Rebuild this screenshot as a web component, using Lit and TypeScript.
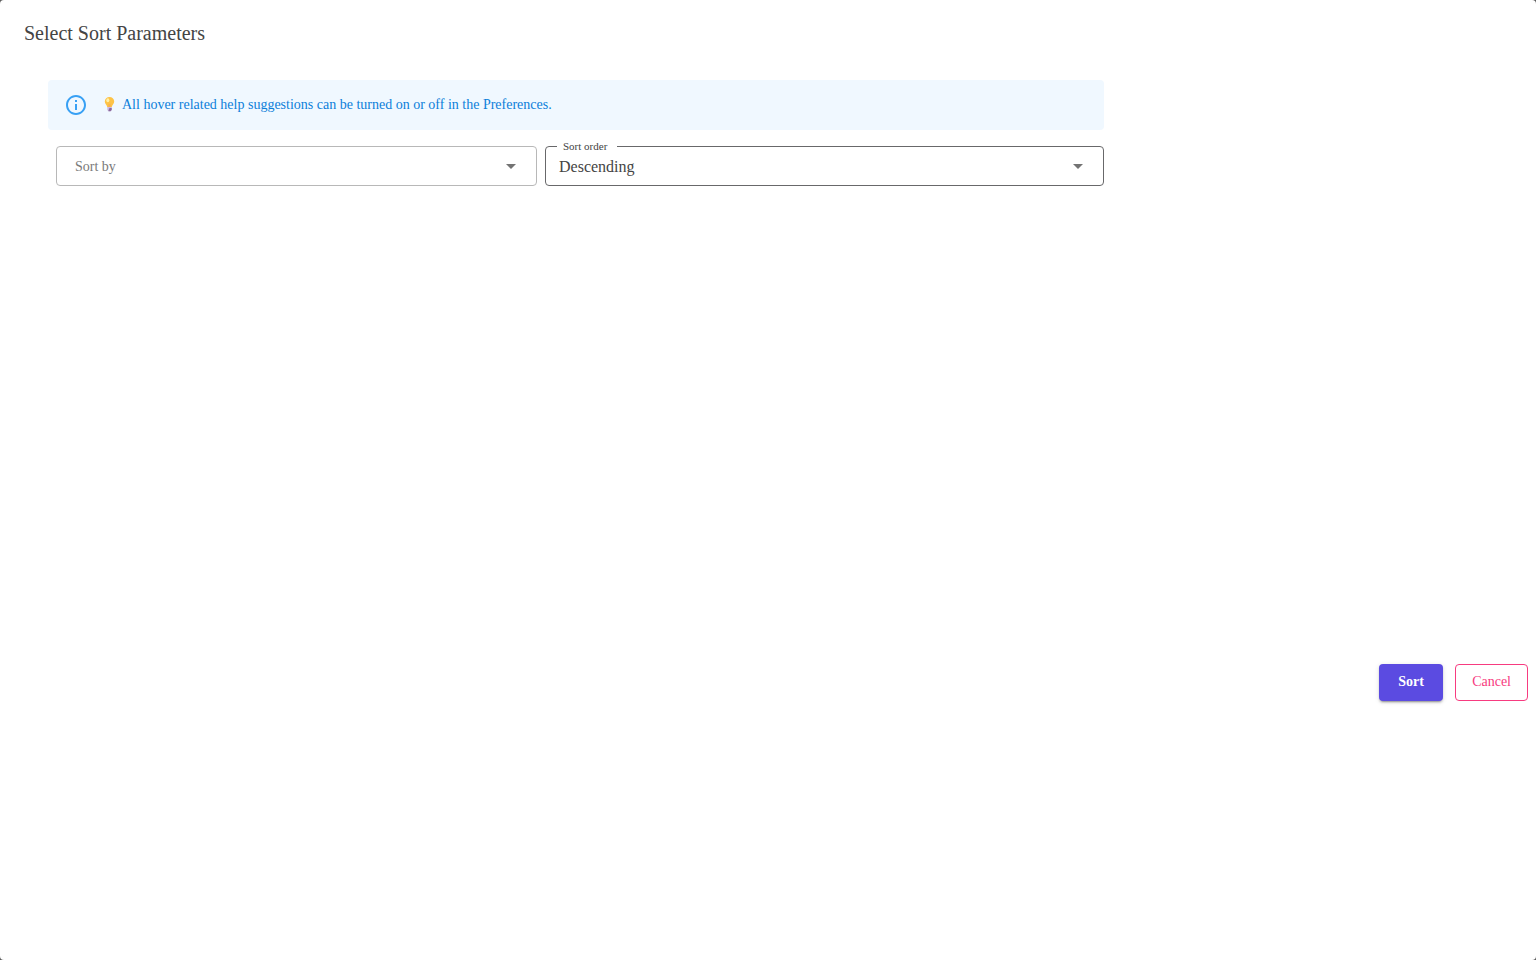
import { LitElement, html, css, svg } from "lit";
import { customElement, state } from "lit/decorators.js";

const arrow = svg`<path d="M7 10l5 5 5-5z" fill="currentColor" />`;

@customElement("app-root")
export class AppRoot extends LitElement {
  static styles = css`
    :host {
      display: block;
      min-height: 100vh;
      background: #5c5c5c;
      font-family: "Liberation Serif", "Times New Roman", serif;
      color: #444;
    }
    * {
      box-sizing: border-box;
    }
    .dialog {
      min-height: 100vh;
      background: #fff;
      border-radius: 4px;
    }
    .title {
      margin: 0;
      padding: 17px 24px 15px;
      font-size: 20px;
      line-height: 32px;
      font-weight: 400;
    }
    .content {
      display: grid;
      grid-template-columns: 22fr 9fr;
      align-content: start;
      min-height: 592px;
      padding: 16px 0 16px 48px;
    }
    .alert {
      display: flex;
      align-items: center;
      gap: 12px;
      min-height: 50px;
      padding: 6px 16px;
      border-radius: 4px;
      background: #f0f8ff;
      color: #0c7fda;
      font-size: 14px;
      line-height: 20px;
    }
    .info {
      flex: none;
      width: 24px;
      height: 24px;
      fill: #38a0f4;
    }
    .message {
      display: flex;
      align-items: center;
      gap: 4px;
    }
    .bulb {
      flex: none;
      width: 18px;
      height: 16px;
    }
    .fields {
      display: grid;
      grid-template-columns: 481fr 559fr;
      gap: 8px;
      padding: 16px 0 0 8px;
    }
    .field {
      position: relative;
      display: grid;
      align-items: center;
    }
    select {
      grid-area: 1 / 1;
      appearance: none;
      width: 100%;
      height: 40px;
      margin: 0;
      padding: 2px 44px 0 13px;
      border: 1px solid #68686a;
      border-radius: 4px;
      background: transparent;
      font-family: inherit;
      font-size: 16px;
      line-height: 24px;
      color: #444;
    }
    select.empty {
      padding-left: 18px;
      border-color: #b8b8b8;
      font-size: 14px;
      color: #7a7a7a;
    }
    .arrow {
      grid-area: 1 / 1;
      justify-self: end;
      width: 24px;
      height: 24px;
      margin-right: 14px;
      color: #737373;
      pointer-events: none;
    }
    .floating {
      position: absolute;
      top: -7px;
      left: 12px;
      padding: 0 10px 0 6px;
      background: #fff;
      font-size: 11px;
      line-height: 14px;
    }
    .actions {
      display: flex;
      justify-content: flex-end;
      gap: 12px;
      padding: 8px;
    }
    button {
      min-width: 64px;
      height: 37px;
      padding: 0 16px 2px;
      border: 0;
      border-radius: 4px;
      font-family: inherit;
      font-size: 14px;
      line-height: 24px;
      cursor: pointer;
    }
    .sort {
      background: #5b4be1;
      color: #fff;
      font-weight: 700;
      box-shadow:
        0 3px 1px -2px rgba(0, 0, 0, 0.2),
        0 2px 2px 0 rgba(0, 0, 0, 0.14),
        0 1px 5px 0 rgba(0, 0, 0, 0.12);
    }
    .cancel {
      border: 1px solid #f73b80;
      background: #fff;
      color: #f73b80;
    }
  `;

  @state() private sortBy = "";

  private onSortBy(e: Event) {
    this.sortBy = (e.target as HTMLSelectElement).value;
  }

  render() {
    return html`
      <div class="dialog" role="dialog" aria-labelledby="title">
        <h2 class="title" id="title">Select Sort Parameters</h2>
        <div class="content">
          <div>
            <div class="alert" role="alert">
              <svg class="info" viewBox="0 0 24 24" aria-hidden="true">
                <path
                  d="M11 7h2v2h-2zm0 4h2v6h-2zm1-9C6.48 2 2 6.48 2 12s4.48 10 10 10 10-4.48 10-10S17.52 2 12 2zm0 18c-4.41 0-8-3.59-8-8s3.59-8 8-8 8 3.59 8 8-3.59 8-8 8z"
                />
              </svg>
              <div class="message">
                <svg class="bulb" viewBox="0 0 18 16" aria-hidden="true">
                  <path
                    d="M9.500 0A4.700 4.600 0 0 0 4.800 4.600c0 2.300 1.900 3.200 2.500 5.600h4.400c.6-2.400 2.500-3.300 2.500-5.600A4.700 4.600 0 0 0 9.500 0z"
                    fill="#fdc347"
                  />
                  <ellipse cx="7.800" cy="3.200" rx="1.500" ry="2" fill="#fff0a8" />
                  <path d="M8.500 6.500l1 1 1-1v4h-2z" fill="#f8ae50" />
                  <path d="M7.300 10h4.400v3l-1.200 1.200H8.500L7.300 13z" fill="#cbb9e2" />
                  <path d="M9.500 11h2.200v2l-1.200 1.200H8.500v-1z" fill="#8c6a9c" />
                </svg>
                <span>All hover related help suggestions can be turned on or off in the Preferences.</span>
              </div>
            </div>
            <div class="fields">
              <div class="field">
                <select
                  class=${this.sortBy ? "" : "empty"}
                  aria-label="Sort by"
                  @change=${this.onSortBy}
                >
                  <option value="">Sort by</option>
                </select>
                <svg class="arrow" viewBox="0 0 24 24" aria-hidden="true">${arrow}</svg>
              </div>
              <div class="field">
                <select id="order">
                  <option>Descending</option>
                </select>
                <label class="floating" for="order">Sort order</label>
                <svg class="arrow" viewBox="0 0 24 24" aria-hidden="true">${arrow}</svg>
              </div>
            </div>
          </div>
        </div>
        <div class="actions">
          <button class="sort" type="button">Sort</button>
          <button class="cancel" type="button">Cancel</button>
        </div>
      </div>
    `;
  }
}
